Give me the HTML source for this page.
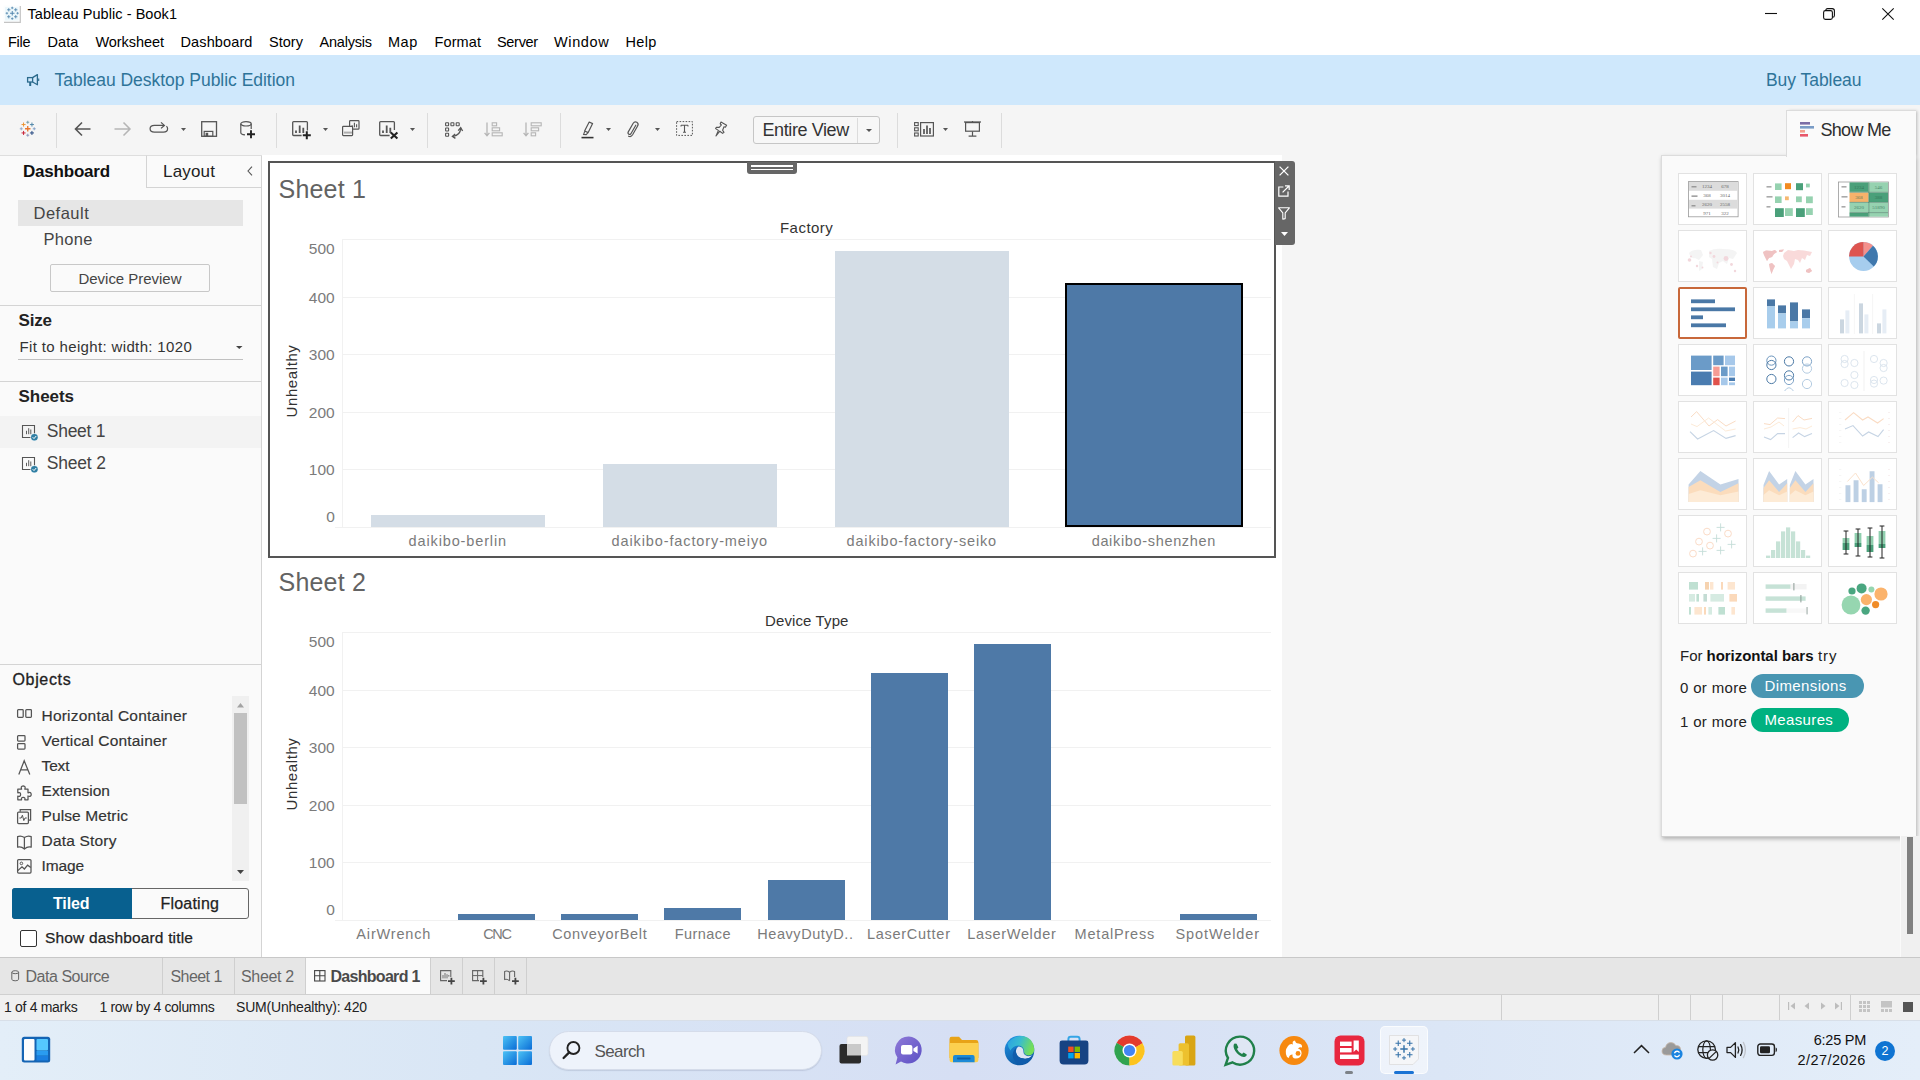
<!DOCTYPE html>
<html><head><meta charset="utf-8"><title>Tableau Public - Book1</title>
<style>
*{box-sizing:border-box;margin:0;padding:0}
html,body{width:1920px;height:1080px;overflow:hidden;background:#fff;font-family:"Liberation Sans",sans-serif;}
#r{position:relative;width:1920px;height:1080px;overflow:hidden}
.a{position:absolute}
.t{position:absolute;white-space:nowrap;line-height:1;}
svg{position:absolute;overflow:visible}
</style></head>
<body><div id="r">
<div class="a" style="left:0px;top:55px;width:1920px;height:50px;background:#cfe8fc;"></div>
<div class="a" style="left:0px;top:105px;width:1920px;height:852px;background:#f5f5f5;"></div>
<div class="a" style="left:0px;top:155px;width:262px;height:802px;background:#fafafa;border-right:1px solid #d4d4d4;"></div>
<div class="a" style="left:0px;top:155px;width:262px;height:1px;background:#dedede;"></div>
<div class="a" style="left:146px;top:155px;width:115px;height:33px;background:#fafafa;border-left:1px solid #d4d4d4;border-bottom:1px solid #d4d4d4;border-top:1px solid #dedede;"></div>
<div class="a" style="left:18px;top:200px;width:225px;height:26px;background:#e6e6e6;"></div>
<div class="a" style="left:50px;top:264px;width:160px;height:28px;background:#fafafa;border:1px solid #c8c8c8;border-radius:2px;"></div>
<div class="a" style="left:0px;top:305px;width:261px;height:1px;background:#d4d4d4;"></div>
<div class="a" style="left:18px;top:359px;width:225px;height:1px;background:#c0c0c0;"></div>
<div class="a" style="left:0px;top:381px;width:261px;height:1px;background:#d4d4d4;"></div>
<div class="a" style="left:0px;top:416px;width:261px;height:32px;background:#f3f3f3;"></div>
<div class="a" style="left:0px;top:664px;width:261px;height:1px;background:#d4d4d4;"></div>
<div class="a" style="left:232px;top:696px;width:17px;height:185px;background:#f0f0f0;"></div>
<div class="a" style="left:234px;top:713px;width:13px;height:91px;background:#c1c1c1;"></div>
<div class="a" style="left:12px;top:888px;width:237px;height:31px;background:#fafafa;border:1px solid #666;border-radius:3px;"></div>
<div class="a" style="left:12px;top:888px;width:120px;height:31px;background:#08608f;border-radius:3px 0 0 3px;"></div>
<div class="a" style="left:20px;top:930px;width:17px;height:17px;background:#fff;border:1px solid #333;border-radius:2px;"></div>
<div class="a" style="left:262px;top:155px;width:1020px;height:802px;background:#fff;"></div>
<div class="a" style="left:0px;top:957px;width:1920px;height:38px;background:#e6e6e6;border-top:1px solid #c8c8c8;border-bottom:1px solid #d0d0d0;"></div>
<div class="a" style="left:306px;top:958px;width:125px;height:36px;background:#fafafa;"></div>
<div class="a" style="left:162px;top:958px;width:1px;height:36px;background:#cfcfcf;"></div>
<div class="a" style="left:234px;top:958px;width:1px;height:36px;background:#cfcfcf;"></div>
<div class="a" style="left:305px;top:958px;width:1px;height:36px;background:#cfcfcf;"></div>
<div class="a" style="left:430px;top:958px;width:1px;height:36px;background:#cfcfcf;"></div>
<div class="a" style="left:462px;top:958px;width:1px;height:36px;background:#cfcfcf;"></div>
<div class="a" style="left:494px;top:958px;width:1px;height:36px;background:#cfcfcf;"></div>
<div class="a" style="left:526px;top:958px;width:1px;height:36px;background:#cfcfcf;"></div>
<div class="a" style="left:0px;top:995px;width:1920px;height:26px;background:#f0f0f0;"></div>
<div class="a" style="left:0px;top:1020px;width:1920px;height:60px;background:linear-gradient(90deg,#e3eef8 0%,#d9e6f5 25%,#d6dff4 50%,#dbe6f6 75%,#e4eef9 100%);border-top:1px solid #d8dfe8;"></div>
<div class="a" style="left:342px;top:239px;width:929px;height:1px;background:#f1f1f1;"></div>
<div class="a" style="left:342px;top:297px;width:929px;height:1px;background:#f1f1f1;"></div>
<div class="a" style="left:342px;top:354px;width:929px;height:1px;background:#f1f1f1;"></div>
<div class="a" style="left:342px;top:412px;width:929px;height:1px;background:#f1f1f1;"></div>
<div class="a" style="left:342px;top:469px;width:929px;height:1px;background:#f1f1f1;"></div>
<div class="a" style="left:342px;top:527px;width:929px;height:1px;background:#f1f1f1;"></div>
<div class="a" style="left:335px;top:527px;width:7px;height:1px;background:#f1f1f1;"></div>
<div class="a" style="left:342px;top:239px;width:1px;height:289px;background:#f1f1f1;"></div>
<div class="a" style="left:371px;top:515px;width:174px;height:12px;background:#d4dde6;"></div>
<div class="a" style="left:603px;top:464px;width:174px;height:63px;background:#d4dde6;"></div>
<div class="a" style="left:835px;top:251px;width:174px;height:276px;background:#d4dde6;"></div>
<div class="a" style="left:1065px;top:283px;width:178px;height:244px;background:#4e79a7;border:2px solid #000;"></div>
<div class="a" style="left:342px;top:632px;width:929px;height:1px;background:#f1f1f1;"></div>
<div class="a" style="left:342px;top:690px;width:929px;height:1px;background:#f1f1f1;"></div>
<div class="a" style="left:342px;top:747px;width:929px;height:1px;background:#f1f1f1;"></div>
<div class="a" style="left:342px;top:805px;width:929px;height:1px;background:#f1f1f1;"></div>
<div class="a" style="left:342px;top:862px;width:929px;height:1px;background:#f1f1f1;"></div>
<div class="a" style="left:342px;top:920px;width:929px;height:1px;background:#f1f1f1;"></div>
<div class="a" style="left:335px;top:920px;width:7px;height:1px;background:#f1f1f1;"></div>
<div class="a" style="left:342px;top:632px;width:1px;height:289px;background:#f1f1f1;"></div>
<div class="a" style="left:458px;top:914px;width:77px;height:6px;background:#4e79a7;"></div>
<div class="a" style="left:561px;top:914px;width:77px;height:6px;background:#4e79a7;"></div>
<div class="a" style="left:664px;top:908px;width:77px;height:12px;background:#4e79a7;"></div>
<div class="a" style="left:768px;top:880px;width:77px;height:40px;background:#4e79a7;"></div>
<div class="a" style="left:871px;top:673px;width:77px;height:247px;background:#4e79a7;"></div>
<div class="a" style="left:974px;top:644px;width:77px;height:276px;background:#4e79a7;"></div>
<div class="a" style="left:1180px;top:914px;width:77px;height:6px;background:#4e79a7;"></div>
<div class="a" style="left:268px;top:161px;width:1008px;height:397px;border:2px solid #555;"></div>
<div class="a" style="left:747px;top:162px;width:50px;height:12px;background:#666;border-radius:0 0 3px 3px;"></div>
<div class="a" style="left:751px;top:165px;width:42px;height:1.5px;background:#fff;"></div>
<div class="a" style="left:751px;top:168.5px;width:42px;height:1.5px;background:#fff;"></div>
<div class="a" style="left:1275px;top:161px;width:20px;height:84px;background:#666;border-radius:0 3px 3px 0;"></div>
<svg style="left:3px;top:5px" width="19" height="19" viewBox="0 0 19 19"><rect x="0.5" y="0.5" width="16.5" height="16.5" fill="#fbfdfe"/><path d="M17.3 1V17.3H1" fill="none" stroke="#c4c4c4" stroke-width="1.2"/><rect x="2" y="2" width="13.5" height="13.5" fill="#e6f3fa" opacity=".7"/></svg>
<svg style="left:4.5px;top:6.3px" width="14.5" height="14.5" viewBox="0 0 20 20"><path d="M6.9 10H13.1M10 6.9V13.1" stroke="#4c82aa" stroke-width="1.3" fill="none"/><path d="M8.3 2.6H11.7M10 0.9000000000000001V4.3" stroke="#4c82aa" stroke-width="1.0" fill="none"/><path d="M8.3 17.4H11.7M10 15.7V19.099999999999998" stroke="#4c82aa" stroke-width="1.0" fill="none"/><path d="M0.9000000000000001 10H4.3M2.6 8.3V11.7" stroke="#4c82aa" stroke-width="1.0" fill="none"/><path d="M15.7 10H19.099999999999998M17.4 8.3V11.7" stroke="#4c82aa" stroke-width="1.0" fill="none"/><path d="M2.9000000000000004 5.2H7.5M5.2 2.9000000000000004V7.5" stroke="#4c82aa" stroke-width="1.1" fill="none"/><path d="M12.5 5.2H17.1M14.8 2.9000000000000004V7.5" stroke="#4c82aa" stroke-width="1.1" fill="none"/><path d="M2.9000000000000004 14.8H7.5M5.2 12.5V17.1" stroke="#4c82aa" stroke-width="1.1" fill="none"/><path d="M12.5 14.8H17.1M14.8 12.5V17.1" stroke="#4c82aa" stroke-width="1.1" fill="none"/></svg>
<svg style="left:1765px;top:8px" width="12" height="12" viewBox="0 0 12 12"><path d="M0 5.5H12" stroke="#111" stroke-width="1.1"/></svg>
<svg style="left:1823px;top:8px" width="12" height="12" viewBox="0 0 12 12"><rect x="0.6" y="2.6" width="8.8" height="8.8" rx="1.8" fill="none" stroke="#111" stroke-width="1.1"/><path d="M2.8 2.6V2.4Q2.8 0.6 4.6 0.6H9.2Q11.4 0.6 11.4 2.8V7.4Q11.4 9.2 9.6 9.2H9.4" fill="none" stroke="#111" stroke-width="1.1"/></svg>
<svg style="left:1882px;top:8px" width="12" height="12" viewBox="0 0 12 12"><path d="M0.3 0.3L11.7 11.7M11.7 0.3L0.3 11.7" stroke="#111" stroke-width="1.1"/></svg>
<svg style="left:26px;top:73px" width="14" height="14" viewBox="0 0 14 14"><rect x="1.6" y="4.6" width="5" height="4.4" fill="none" stroke="#2b6a8c" stroke-width="1.3"/><path d="M6.6 4.6L11.4 1.6V11.8L6.6 9" fill="none" stroke="#2b6a8c" stroke-width="1.3" stroke-linejoin="round"/><path d="M4.2 9V13" stroke="#2b6a8c" stroke-width="2"/><path d="M12.7 5.4V8" stroke="#2b6a8c" stroke-width="1.1"/></svg>
<svg style="left:19px;top:120px" width="17.5" height="17.5" viewBox="0 0 20 20"><path d="M6.9 10H13.1M10 6.9V13.1" stroke="#e8762d" stroke-width="1.5" fill="none"/><path d="M8.3 2.6H11.7M10 0.9000000000000001V4.3" stroke="#7099a6" stroke-width="1.0" fill="none"/><path d="M8.3 17.4H11.7M10 15.7V19.099999999999998" stroke="#8590b8" stroke-width="1.0" fill="none"/><path d="M0.9000000000000001 10H4.3M2.6 8.3V11.7" stroke="#8fa3c4" stroke-width="1.0" fill="none"/><path d="M15.7 10H19.099999999999998M17.4 8.3V11.7" stroke="#7d9cc4" stroke-width="1.0" fill="none"/><path d="M2.9000000000000004 5.2H7.5M5.2 2.9000000000000004V7.5" stroke="#eb912c" stroke-width="1.1" fill="none"/><path d="M12.5 5.2H17.1M14.8 2.9000000000000004V7.5" stroke="#4f86a8" stroke-width="1.1" fill="none"/><path d="M2.9000000000000004 14.8H7.5M5.2 12.5V17.1" stroke="#c72035" stroke-width="1.1" fill="none"/><path d="M12.5 14.8H17.1M14.8 12.5V17.1" stroke="#1f447e" stroke-width="1.1" fill="none"/></svg>
<div class="a" style="left:56px;top:113px;width:1px;height:35px;background:#dcdcdc"></div>
<div class="a" style="left:276px;top:113px;width:1px;height:35px;background:#dcdcdc"></div>
<div class="a" style="left:427px;top:113px;width:1px;height:35px;background:#dcdcdc"></div>
<div class="a" style="left:560px;top:113px;width:1px;height:35px;background:#dcdcdc"></div>
<div class="a" style="left:897px;top:113px;width:1px;height:35px;background:#dcdcdc"></div>
<div class="a" style="left:1001px;top:113px;width:1px;height:35px;background:#dcdcdc"></div>
<svg style="left:74px;top:121px" width="18" height="16" viewBox="0 0 18 16"><path d="M16.5 8H1.5M8 1.5L1.5 8L8 14.5" fill="none" stroke="#555" stroke-width="1.6"/></svg>
<svg style="left:113.5px;top:121px" width="18" height="16" viewBox="0 0 18 16"><path d="M0.5 8H15.5M9.5 1.5L16 8L9.5 14.5" fill="none" stroke="#b5b5b5" stroke-width="1.5"/></svg>
<svg style="left:149px;top:121px" width="20" height="14" viewBox="0 0 20 14"><path d="M15 4.4H5.4Q1.1 4.4 1.1 7.7Q1.1 11 5.4 11H14.4Q18.6 11 18.6 7.7Q18.6 6 17.4 5.2" fill="none" stroke="#555" stroke-width="1.25"/><path d="M12 1.4L15.4 4.4L12 7.4" fill="none" stroke="#555" stroke-width="1.25"/></svg>
<svg style="left:181.0px;top:128.0px" width="5" height="3" viewBox="0 0 5 3"><path d="M0 0H5L2.5 3Z" fill="#555"/></svg>
<svg style="left:201px;top:121px" width="16" height="17" viewBox="0 0 16 17"><rect x="0.7" y="0.7" width="14.8" height="14.6" fill="none" stroke="#555" stroke-width="1.3"/><rect x="3.2" y="10.4" width="8.6" height="4.9" fill="none" stroke="#555" stroke-width="1.2"/><rect x="4.6" y="11.8" width="2.6" height="3.4" fill="#555"/></svg>
<svg style="left:240px;top:121px" width="16" height="18" viewBox="0 0 16 18"><ellipse cx="6" cy="2.8" rx="5.2" ry="2.2" fill="none" stroke="#555" stroke-width="1.2"/><path d="M0.8 2.8V11.5Q0.8 13.6 5 13.8M11.2 2.8V8" fill="none" stroke="#555" stroke-width="1.2"/><path d="M7 13.2H15M11 9.2V17.2" stroke="#222" stroke-width="1.9"/></svg>
<svg style="left:292px;top:121px" width="20" height="18" viewBox="0 0 20 18"><path d="M15.4 9.6V1.6Q15.4 0.7 14.5 0.7H1.6Q0.7 0.7 0.7 1.6V13.6Q0.7 14.5 1.6 14.5H9.6" fill="none" stroke="#555" stroke-width="1.3"/><path d="M4 12V9.4M7.7 12V4.4M11.3 12V6.8" stroke="#555" stroke-width="1.8"/><path d="M10.8 14.2H18.8M14.8 10.2V18.2" stroke="#222" stroke-width="2"/></svg>
<svg style="left:323.0px;top:128.0px" width="5" height="3" viewBox="0 0 5 3"><path d="M0 0H5L2.5 3Z" fill="#555"/></svg>
<svg style="left:342px;top:120px" width="18" height="17" viewBox="0 0 18 17"><rect x="7.6" y="0.6" width="9.4" height="8.6" rx="0.8" fill="none" stroke="#555" stroke-width="1.2"/><path d="M10.2 7.2V5.2M12.4 7.2V2.8M14.6 7.2V4.2" stroke="#555" stroke-width="1.1"/><rect x="0.6" y="6.4" width="10" height="9.2" rx="0.8" fill="#f5f5f5" stroke="#555" stroke-width="1.2"/><path d="M3 13.6V11.6M5 13.6V11.6M7 13.6V11.6M9 13.6V11.6" stroke="#555" stroke-width="0.9"/></svg>
<svg style="left:379px;top:121px" width="20" height="18" viewBox="0 0 20 18"><path d="M15.4 9V1.6Q15.4 0.7 14.5 0.7H1.6Q0.7 0.7 0.7 1.6V13.6Q0.7 14.5 1.6 14.5H10.6" fill="none" stroke="#555" stroke-width="1.3"/><path d="M4 12V9.4M7.7 12V4.4M11.3 12V6.8" stroke="#555" stroke-width="1.8"/><path d="M11.8 11.4L18.4 17.6M18.4 11.4L11.8 17.6" stroke="#222" stroke-width="2.1"/></svg>
<svg style="left:410.0px;top:128.0px" width="5" height="3" viewBox="0 0 5 3"><path d="M0 0H5L2.5 3Z" fill="#555"/></svg>
<svg style="left:444.5px;top:121.5px" width="19" height="17" viewBox="0 0 19 17"><rect x="0.6" y="0.8" width="3" height="3" rx="0.5" fill="none" stroke="#555" stroke-width="1.1"/><rect x="5.9" y="0.8" width="3" height="3" rx="0.5" fill="none" stroke="#555" stroke-width="1.1"/><rect x="11.2" y="0.8" width="3" height="3" rx="0.5" fill="none" stroke="#555" stroke-width="1.1"/><rect x="0.6" y="6" width="3" height="3" rx="0.5" fill="none" stroke="#555" stroke-width="1.1"/><rect x="0.6" y="11.2" width="3" height="3" rx="0.5" fill="none" stroke="#555" stroke-width="1.1"/><path d="M15.6 6.6Q15.4 13.2 8 14.4" fill="none" stroke="#555" stroke-width="1.3"/><path d="M13.2 8.6L15.7 5.6L17.6 9" fill="none" stroke="#555" stroke-width="1.3"/><path d="M10.2 12L7.4 14.4L10.4 16.4" fill="none" stroke="#555" stroke-width="1.3"/></svg>
<svg style="left:484px;top:121.5px" width="19" height="15" viewBox="0 0 19 15"><path d="M3 0.5V13.5M0.6 10.8L3 13.8L5.4 10.8" fill="none" stroke="#b5b5b5" stroke-width="1.3"/><rect x="8.2" y="0.8" width="4.4" height="3" fill="none" stroke="#b5b5b5" stroke-width="1.1"/><rect x="8.2" y="5.8" width="7.4" height="3" fill="none" stroke="#b5b5b5" stroke-width="1.1"/><rect x="8.2" y="10.8" width="10" height="3" fill="none" stroke="#b5b5b5" stroke-width="1.1"/></svg>
<svg style="left:522.5px;top:121.5px" width="19" height="15" viewBox="0 0 19 15"><path d="M3 0.5V13.5M0.6 10.8L3 13.8L5.4 10.8" fill="none" stroke="#b5b5b5" stroke-width="1.3"/><rect x="8.2" y="0.8" width="10" height="3" fill="none" stroke="#b5b5b5" stroke-width="1.1"/><rect x="8.2" y="5.8" width="7.4" height="3" fill="none" stroke="#b5b5b5" stroke-width="1.1"/><rect x="8.2" y="10.8" width="4.4" height="3" fill="none" stroke="#b5b5b5" stroke-width="1.1"/></svg>
<svg style="left:580.5px;top:120.5px" width="14" height="18" viewBox="0 0 14 18"><path d="M8.2 1L11.6 2.6L7.2 11.6L3.6 10Z" fill="none" stroke="#555" stroke-width="1.2" stroke-linejoin="round"/><path d="M3.8 10.2L2.6 13.4L5.2 13.6L7 11.6" fill="none" stroke="#555" stroke-width="1.1"/><path d="M0.5 16.6H12.5" stroke="#333" stroke-width="1.6"/></svg>
<svg style="left:606.0px;top:128.0px" width="5" height="3" viewBox="0 0 5 3"><path d="M0 0H5L2.5 3Z" fill="#555"/></svg>
<svg style="left:626px;top:120.5px" width="14" height="17" viewBox="0 0 14 17"><path d="M9.8 4.2L5.2 12.2Q4.2 14 2.8 13.2Q1.4 12.4 2.4 10.6L7.2 2.2Q8.6 0 10.8 1.2Q13 2.6 11.6 5L6.6 13.8Q5 16.4 2.6 15.2" fill="none" stroke="#555" stroke-width="1.2" stroke-linecap="round"/></svg>
<svg style="left:655.0px;top:128.0px" width="5" height="3" viewBox="0 0 5 3"><path d="M0 0H5L2.5 3Z" fill="#555"/></svg>
<svg style="left:676px;top:121px" width="17" height="15" viewBox="0 0 17 15"><rect x="0.6" y="0.6" width="15.8" height="13.8" fill="none" stroke="#555" stroke-width="1" stroke-dasharray="1.6 1.4"/><path d="M5 4.2H12M8.5 4.2V11.2M7 11.2H10M5 4.2V5.6M12 4.2V5.6" stroke="#555" stroke-width="1.1" fill="none"/></svg>
<svg style="left:714px;top:120.5px" width="14" height="16" viewBox="0 0 14 16"><path d="M7 1L12.6 4.2L11.4 6.2L10 5.8L8.6 9.2L10 11.4L8.6 12.4L5.8 10.2L2 15L4.4 9.4L1.6 7.6L2.4 6.2L5.2 6.4L7.4 4L6.2 2.8Z" fill="none" stroke="#555" stroke-width="1.1" stroke-linejoin="round"/></svg>
<div class="a" style="left:753px;top:116px;width:127px;height:28px;border:1px solid #c6c6c6;border-radius:3px;background:#f7f7f7"></div>
<div class="a" style="left:857px;top:117.5px;width:1px;height:25px;background:#dcdcdc"></div>
<svg style="left:865.5px;top:128.5px" width="6" height="3" viewBox="0 0 6 3"><path d="M0 0H6L3.0 3Z" fill="#555"/></svg>
<svg style="left:914px;top:121.5px" width="20" height="15" viewBox="0 0 20 15"><rect x="0.6" y="0.6" width="3.6" height="3" fill="none" stroke="#555" stroke-width="1.1"/><rect x="0.6" y="5.8" width="3.6" height="3" fill="none" stroke="#555" stroke-width="1.1"/><rect x="0.6" y="11" width="3.6" height="3" fill="none" stroke="#555" stroke-width="1.1"/><rect x="6.6" y="0.6" width="12.8" height="13.4" fill="none" stroke="#555" stroke-width="1.2"/><path d="M10 12V7M13 12V3.6M16 12V6" stroke="#555" stroke-width="1.7"/></svg>
<svg style="left:943.0px;top:128.0px" width="5" height="3" viewBox="0 0 5 3"><path d="M0 0H5L2.5 3Z" fill="#555"/></svg>
<svg style="left:964px;top:121px" width="17" height="16" viewBox="0 0 17 16"><path d="M0 1H17" stroke="#555" stroke-width="1.3"/><rect x="1.6" y="1.6" width="13.8" height="8.6" fill="none" stroke="#555" stroke-width="1.2"/><path d="M8.5 10.4V15M4.6 15.2H12.4M8.5 0V1" stroke="#555" stroke-width="1.2"/></svg>
<svg style="left:247px;top:166px" width="6" height="10" viewBox="0 0 6 10"><path d="M5 0.6L1 5L5 9.4" fill="none" stroke="#555" stroke-width="1.1"/></svg>
<svg style="left:235.75px;top:345.5px" width="6.5" height="3" viewBox="0 0 6.5 3"><path d="M0 0H6.5L3.25 3Z" fill="#444"/></svg>
<svg style="left:22px;top:425px" width="17" height="17" viewBox="0 0 17 17"><path d="M12.5 8.6V0.5H0.5V12.5H8.6" fill="none" stroke="#555" stroke-width="1.1"/><path d="M4.5 9.2V5.8M6.7 9.2V3.2M8.8 9.2V4.5" stroke="#555" stroke-width="0.95"/><circle cx="12.4" cy="12.2" r="3.7" fill="#d4e8f2"/><circle cx="12.4" cy="12.2" r="3.3" fill="#2f7ea3"/><path d="M10.7 12.2L12 13.6L14.2 11" fill="none" stroke="#fff" stroke-width="1"/></svg>
<svg style="left:22px;top:457px" width="17" height="17" viewBox="0 0 17 17"><path d="M12.5 8.6V0.5H0.5V12.5H8.6" fill="none" stroke="#555" stroke-width="1.1"/><path d="M4.5 9.2V5.8M6.7 9.2V3.2M8.8 9.2V4.5" stroke="#555" stroke-width="0.95"/><circle cx="12.4" cy="12.2" r="3.7" fill="#d4e8f2"/><circle cx="12.4" cy="12.2" r="3.3" fill="#2f7ea3"/><path d="M10.7 12.2L12 13.6L14.2 11" fill="none" stroke="#fff" stroke-width="1"/></svg>
<svg style="left:17px;top:709px" width="16" height="10" viewBox="0 0 16 10"><rect x="0.6" y="0.6" width="5.6" height="7.8" rx="0.8" fill="none" stroke="#555" stroke-width="1.25"/><rect x="8.8" y="0.6" width="5.6" height="7.8" rx="0.8" fill="none" stroke="#555" stroke-width="1.25"/></svg>
<svg style="left:17px;top:734.5px" width="10" height="16" viewBox="0 0 10 16"><rect x="0.6" y="0.6" width="7.4" height="5.4" rx="0.8" fill="none" stroke="#555" stroke-width="1.25"/><rect x="0.6" y="8.6" width="7.4" height="5.4" rx="0.8" fill="none" stroke="#555" stroke-width="1.25"/></svg>
<svg style="left:18px;top:759.5px" width="13" height="15" viewBox="0 0 13 15"><path d="M0.8 14.6L6.2 0.8L11.8 14.6M2.8 9.8H9.8" fill="none" stroke="#555" stroke-width="1.25"/></svg>
<svg style="left:17px;top:784.5px" width="15" height="16" viewBox="0 0 15 16"><path d="M4.6 4.2Q3.4 1 6.2 0.8Q9 1 7.8 4.2H11V7.8Q14.2 6.6 14.2 9.4Q14.2 12 11 11V14.8H7.8Q8.6 12.4 6.2 12.4Q3.8 12.4 4.6 14.8H0.8V11Q3.6 12 3.6 9.4Q3.6 6.8 0.8 7.8V4.2Z" fill="none" stroke="#555" stroke-width="1.25" stroke-linejoin="round"/></svg>
<svg style="left:17px;top:809px" width="15" height="16" viewBox="0 0 15 16"><path d="M3.2 2.8V0.6H13.6V11.2H11.6" fill="none" stroke="#555" stroke-width="1.25"/><rect x="0.6" y="3" width="10.8" height="11.6" rx="1" fill="none" stroke="#555" stroke-width="1.25"/><path d="M2.4 9H4.2L5.4 6.2L6.8 11.6L8 9H9.8" fill="none" stroke="#555" stroke-width="1"/></svg>
<svg style="left:17px;top:835px" width="16" height="15" viewBox="0 0 16 15"><path d="M7.4 2.6V14M7.4 2.6Q4 0.2 0.6 1.6V12.2Q4 11 7.4 14Q10.8 11 14.2 12.2V1.6Q10.8 0.2 7.4 2.6" fill="none" stroke="#555" stroke-width="1.25" stroke-linejoin="round"/></svg>
<svg style="left:17px;top:859px" width="15" height="15" viewBox="0 0 15 15"><rect x="0.6" y="0.6" width="13.4" height="13.4" rx="1" fill="none" stroke="#555" stroke-width="1.25"/><circle cx="4.4" cy="4.4" r="1.3" fill="none" stroke="#555" stroke-width="1"/><path d="M0.8 11.6L5 7.8L7.4 10L10.6 6.2L13.8 8.6" fill="none" stroke="#555" stroke-width="1.25"/></svg>
<svg style="left:237px;top:702.5px" width="7" height="4.5" viewBox="0 0 7 4.5"><path d="M0 4.5L3.5 0L7 4.5Z" fill="#a3a3a3"/></svg>
<svg style="left:237px;top:869.5px" width="7" height="4" viewBox="0 0 7 4"><path d="M0 0H7L3.5 4Z" fill="#444"/></svg>
<svg style="left:11px;top:970px" width="9" height="12" viewBox="0 0 9 12"><ellipse cx="4.2" cy="2.2" rx="3.4" ry="1.5" fill="none" stroke="#666" stroke-width="1"/><path d="M0.8 2.2V9.2Q0.8 10.8 4.2 10.8Q7.6 10.8 7.6 9.2V2.2" fill="none" stroke="#666" stroke-width="1"/></svg>
<svg style="left:314px;top:970px" width="12" height="12" viewBox="0 0 12 12"><rect x="0.6" y="0.6" width="10.4" height="10.4" fill="none" stroke="#444" stroke-width="1.1"/><path d="M5.8 0.6V11M0.6 5.8H11" stroke="#444" stroke-width="1.1"/></svg>
<svg style="left:440px;top:969.5px" width="16" height="16" viewBox="0 0 16 16"><path d="M10.8 7V0.6H0.6V10.6H7" fill="none" stroke="#666" stroke-width="1.1"/><path d="M3 8.4V5M5 8.4V3M7 8.4V4.2M8.8 6.6V5" stroke="#666" stroke-width="0.9"/><path d="M8 11.2H14.8M11.4 7.8V14.6" stroke="#444" stroke-width="1.8"/></svg>
<svg style="left:472px;top:969.5px" width="16" height="16" viewBox="0 0 16 16"><path d="M10.8 7V0.6H0.6V10.6H7" fill="none" stroke="#666" stroke-width="1.1"/><path d="M5.6 0.6V10.6M0.6 5.6H10.8" stroke="#666" stroke-width="1"/><path d="M8 11.2H14.8M11.4 7.8V14.6" stroke="#444" stroke-width="1.8"/></svg>
<svg style="left:504px;top:969.5px" width="16" height="16" viewBox="0 0 16 16"><path d="M5.6 2.2V10.8M5.6 2.2Q3 0.4 0.6 1.4V9.6Q3 8.6 5.6 10.8M5.6 2.2Q8 0.4 10.6 1.4V7" fill="none" stroke="#666" stroke-width="1.1" stroke-linejoin="round"/><path d="M8 11.2H14.8M11.4 7.8V14.6" stroke="#444" stroke-width="1.8"/></svg>
<svg style="left:1279px;top:166px" width="10" height="10" viewBox="0 0 10 10"><path d="M0.6 0.6L9.4 9.4M9.4 0.6L0.6 9.4" stroke="#fff" stroke-width="1.3"/></svg>
<svg style="left:1278px;top:185px" width="12" height="12" viewBox="0 0 12 12"><path d="M5.4 2H0.8V11.2H10V6.6" fill="none" stroke="#fff" stroke-width="1.2"/><path d="M4.6 7.4L11 1M7 0.8H11.2V5" fill="none" stroke="#fff" stroke-width="1.2"/></svg>
<svg style="left:1278px;top:207px" width="12" height="13" viewBox="0 0 12 13"><path d="M0.6 0.8H11.4L7.2 5.8V11.6L4.8 12.2V5.8Z" fill="none" stroke="#fff" stroke-width="1.1" stroke-linejoin="round"/></svg>
<svg style="left:1281px;top:232px" width="7" height="4" viewBox="0 0 7 4"><path d="M0 0H7L3.5 4Z" fill="#fff"/></svg>
<div class="a" style="left:1501px;top:995px;width:1px;height:25px;background:#cfcfcf"></div>
<div class="a" style="left:1658px;top:995px;width:1px;height:25px;background:#cfcfcf"></div>
<div class="a" style="left:1690px;top:995px;width:1px;height:25px;background:#cfcfcf"></div>
<div class="a" style="left:1722px;top:995px;width:1px;height:25px;background:#cfcfcf"></div>
<div class="a" style="left:1779px;top:995px;width:1px;height:25px;background:#cfcfcf"></div>
<div class="a" style="left:1850px;top:995px;width:1px;height:25px;background:#cfcfcf"></div>
<svg style="left:1788px;top:1002px" width="8" height="8" viewBox="0 0 8 8"><path d="M0.6 0V8" stroke="#bdbdbd" stroke-width="1.2"/><path d="M7 0.5L2.5 4L7 7.5Z" fill="#bdbdbd"/></svg>
<svg style="left:1804px;top:1002px" width="6" height="8" viewBox="0 0 6 8"><path d="M5 0.5L0.5 4L5 7.5Z" fill="#bdbdbd"/></svg>
<svg style="left:1820px;top:1002px" width="6" height="8" viewBox="0 0 6 8"><path d="M1 0.5L5.5 4L1 7.5Z" fill="#bdbdbd"/></svg>
<svg style="left:1834px;top:1002px" width="8" height="8" viewBox="0 0 8 8"><path d="M7.4 0V8" stroke="#bdbdbd" stroke-width="1.2"/><path d="M1 0.5L5.5 4L1 7.5Z" fill="#bdbdbd"/></svg>
<svg style="left:1858.5px;top:1001px" width="11" height="11" viewBox="0 0 11 11"><rect x="0" y="0" width="3" height="3" fill="#c4c4c4"/><rect x="0" y="4" width="3" height="3" fill="#c4c4c4"/><rect x="0" y="8" width="3" height="3" fill="#c4c4c4"/><rect x="4" y="0" width="3" height="3" fill="#c4c4c4"/><rect x="4" y="4" width="3" height="3" fill="#c4c4c4"/><rect x="4" y="8" width="3" height="3" fill="#c4c4c4"/><rect x="8" y="0" width="3" height="3" fill="#c4c4c4"/><rect x="8" y="4" width="3" height="3" fill="#c4c4c4"/><rect x="8" y="8" width="3" height="3" fill="#c4c4c4"/></svg>
<svg style="left:1880.5px;top:1001px" width="11" height="11" viewBox="0 0 11 11"><rect x="0" y="0" width="11" height="6.5" fill="#c4c4c4"/><rect x="0" y="8" width="3" height="3" fill="#c4c4c4"/><rect x="4" y="8" width="3" height="3" fill="#c4c4c4"/><rect x="8" y="8" width="3" height="3" fill="#c4c4c4"/></svg>
<svg style="left:1903px;top:1001.5px" width="10" height="10" viewBox="0 0 10 10"><rect x="0" y="0" width="10" height="10" fill="#555"/></svg>
<svg style="left:21px;top:1036px" width="30" height="28" viewBox="0 0 30 28"><rect x="0.8" y="0.8" width="28.4" height="25.8" rx="2.5" fill="#1464b4"/><rect x="3" y="3" width="10.5" height="21.5" rx="1" fill="#fdfdfd"/><rect x="15.5" y="3" width="11.5" height="11.5" rx="1" fill="#55c8ff"/><rect x="15.5" y="15" width="11.5" height="4.6" fill="#2a9cf0"/><rect x="15.5" y="20" width="11.5" height="4.5" fill="#1a7fe0"/></svg>
<svg style="left:503px;top:1036px" width="29" height="29" viewBox="0 0 29 29"><defs><linearGradient id="wg" x1="0" y1="0" x2="1" y2="1"><stop offset="0" stop-color="#4cc2f5"/><stop offset="1" stop-color="#0a6cd6"/></linearGradient></defs><rect x="0" y="0" width="13.8" height="13.8" rx="1" fill="url(#wg)"/><rect x="15.2" y="0" width="13.8" height="13.8" rx="1" fill="url(#wg)"/><rect x="0" y="15.2" width="13.8" height="13.8" rx="1" fill="url(#wg)"/><rect x="15.2" y="15.2" width="13.8" height="13.8" rx="1" fill="url(#wg)"/></svg>
<div class="a" style="left:549px;top:1031px;width:273px;height:39px;border-radius:20px;background:#eef3fb;border:1px solid #d5dcea;box-shadow:0 1px 1px rgba(120,130,160,.25)"></div>
<svg style="left:562px;top:1040px" width="20" height="20" viewBox="0 0 20 20"><circle cx="11.4" cy="8" r="6" fill="none" stroke="#222" stroke-width="1.9"/><path d="M7.2 12.4L1.6 18" stroke="#222" stroke-width="2.3" stroke-linecap="round"/></svg>
<svg style="left:839px;top:1036px" width="31" height="29" viewBox="0 0 31 29"><rect x="8" y="0.5" width="21" height="19" rx="2" fill="#f4f4f4" stroke="#e2e2e2" stroke-width="0.6"/><rect x="0.5" y="8" width="21.5" height="19.5" rx="2" fill="#2b2b2b"/><rect x="8" y="8" width="14" height="11.5" fill="#c9c9c9"/></svg>
<svg style="left:894px;top:1035px" width="30" height="31" viewBox="0 0 30 31"><defs><linearGradient id="cg" x1="0" y1="0" x2="1" y2="1"><stop offset="0" stop-color="#8f7ad8"/><stop offset="1" stop-color="#5b4fc4"/></linearGradient></defs><path d="M15 1.5A13.5 13.5 0 1 1 7 26.4L1.6 29.4L3.4 22.6A13.5 13.5 0 0 1 15 1.5Z" fill="url(#cg)"/><rect x="7" y="10" width="11.4" height="9.4" rx="2" fill="#fff"/><path d="M19.4 13.4L23.6 10.8V18.6L19.4 16Z" fill="#fff"/></svg>
<svg style="left:949px;top:1036px" width="30" height="27" viewBox="0 0 30 27"><path d="M0.5 3Q0.5 0.8 2.6 0.8H10L13 4H27Q29.4 4 29.4 6.2V22H0.5Z" fill="#e8a317"/><path d="M0.5 7H29.4V24Q29.4 26.2 27 26.2H2.8Q0.5 26.2 0.5 24Z" fill="#fcd04f"/><path d="M4 21Q4 19 6 19H23.6Q25.6 19 25.6 21V26.2H4Z" fill="#1c8ad6"/><rect x="8" y="21.6" width="13.6" height="1.8" rx="0.9" fill="#0e5ea6"/></svg>
<svg style="left:1004px;top:1035px" width="31" height="31" viewBox="0 0 31 31"><defs><linearGradient id="eg" x1="0" y1="0" x2="1" y2="0.3"><stop offset="0" stop-color="#2a9fe4"/><stop offset="0.5" stop-color="#38bcd0"/><stop offset="1" stop-color="#74de58"/></linearGradient><linearGradient id="eb" x1="0.2" y1="0" x2="0.6" y2="1"><stop offset="0" stop-color="#2092e2"/><stop offset="1" stop-color="#0c57a2"/></linearGradient></defs><circle cx="15.5" cy="15.5" r="14.8" fill="url(#eb)"/><path d="M3.6 8.4Q9.6 0.4 18.6 1Q29.6 2.8 30.3 14.2Q30 20 24.4 20.4Q19.8 20.2 20 16.2Q19.6 11 14.2 10.6Q9 10.8 6.4 15.6Q3.8 12.4 3.6 8.4Z" fill="url(#eg)"/><path d="M14.6 11.4Q19.2 11.8 19.4 16Q19.2 20.6 24 21.2L28.6 20.6Q24.6 24.6 19.6 23.6Q12.6 22.4 11.8 16.6Q11.8 12.4 14.6 11.4Z" fill="#dde4f4"/><path d="M11.8 16.6Q12.6 22.4 19.6 23.6Q24.6 24.6 28.6 20.6Q26 28 18 29.6Q9.4 28 8.6 20Q8.8 14 14.6 11.4Q11.8 12.4 11.8 16.6Z" fill="#0f5cab"/></svg>
<svg style="left:1058.5px;top:1035px" width="30" height="31" viewBox="0 0 30 31"><path d="M9.4 6V4.2Q9.4 1.8 11.8 1.8H18.2Q20.6 1.8 20.6 4.2V6" fill="none" stroke="#35a5e6" stroke-width="2"/><path d="M0.6 8Q0.6 5.6 3 5.6H27Q29.4 5.6 29.4 8V25.6Q29.4 29.6 25.4 29.6H4.6Q0.6 29.6 0.6 25.6Z" fill="#174383"/><rect x="9.2" y="11.6" width="5.4" height="5.4" fill="#f25022"/><rect x="15.6" y="11.6" width="5.4" height="5.4" fill="#7fba00"/><rect x="9.2" y="18" width="5.4" height="5.4" fill="#00a4ef"/><rect x="15.6" y="18" width="5.4" height="5.4" fill="#ffb900"/></svg>
<svg style="left:1113.5px;top:1035px" width="31" height="31" viewBox="0 0 31 31"><circle cx="15.5" cy="15.5" r="15" fill="#fff"/><path d="M15.5 15.5L2.5 8A15 15 0 0 1 28.5 8Z" fill="#e33b2e"/><path d="M15.5 15.5L28.5 8A15 15 0 0 1 15.5 30.5Z" fill="#fcc31e"/><path d="M15.5 15.5L15.5 30.5A15 15 0 0 1 2.5 8Z" fill="#30a350"/><path d="M2.5 8L9.6 19.2L15.5 15.5Z" fill="#30a350"/><path d="M28.5 8H15.5V15.5Z" fill="#e33b2e"/><path d="M15.5 30.5L21.8 19L15.5 15.5Z" fill="#fcc31e"/><circle cx="15.5" cy="15.5" r="7" fill="#fff"/><circle cx="15.5" cy="15.5" r="5.6" fill="#4285f4"/></svg>
<svg style="left:1172px;top:1035px" width="24" height="31" viewBox="0 0 24 31"><rect x="13" y="0.5" width="10.4" height="30" rx="1.6" fill="#d9a514"/><rect x="6.6" y="8.2" width="10.4" height="22.3" rx="1.6" fill="#edc12e"/><rect x="0.4" y="16" width="10.4" height="14.5" rx="1.6" fill="#f7dd5c"/></svg>
<svg style="left:1223.5px;top:1034.5px" width="32" height="32" viewBox="0 0 32 32"><path d="M16 1.6A14 14 0 1 1 8.6 27.4L1.6 29.8L4 23A14 14 0 0 1 16 1.6Z" fill="#dfe6f4" stroke="#20804a" stroke-width="2.4"/><path d="M10.6 8.6Q9.2 9.6 9.6 12Q10.6 16.6 15 20Q18.6 22.6 21 21.8Q22.8 21 22.8 19.4L19.6 17.6L18 19Q14.6 17.6 13 14L14.4 12.6L12.6 8.8Z" fill="#20804a"/></svg>
<svg style="left:1279px;top:1035px" width="30" height="31" viewBox="0 0 30 31"><circle cx="15" cy="15.5" r="14.6" fill="#f7890f"/><path d="M8 22Q5 16 9 11Q11 8.4 14 9.4Q12.6 6 16 5.4Q16.6 8.6 19.6 8.4Q23.6 9 23 12.6Q20.6 11.6 19 13.6Q22.6 14.6 22.6 18.6Q22 23.6 16.6 23.6Q12.6 23 13.6 19.4Q10 19.4 10 23Z" fill="#fff"/><circle cx="19" cy="18.4" r="2.4" fill="#f7890f"/></svg>
<svg style="left:1334px;top:1035px" width="31" height="31" viewBox="0 0 31 31"><rect x="0.5" y="0.5" width="30" height="30" rx="6" fill="#e8273f"/><rect x="6" y="6.6" width="11.6" height="4.4" fill="#fff"/><rect x="6" y="13" width="11.6" height="4.4" fill="#fff"/><rect x="6" y="19.6" width="18.8" height="4.4" fill="#fff"/><path d="M19.6 5.4H24.8V17L22.2 14.4L19.6 17Z" fill="#fff"/></svg>
<div class="a" style="left:1345px;top:1071px;width:8px;height:3px;border-radius:2px;background:#7d8288"></div>
<div class="a" style="left:1380px;top:1026px;width:48px;height:48px;border-radius:5px;background:rgba(255,255,255,.55);border:1px solid rgba(255,255,255,.7)"></div>
<svg style="left:1389px;top:1035px" width="30" height="30" viewBox="0 0 30 30"><path d="M0.5 0.5H29.5V24L24 29.5H0.5Z" fill="#f5f6f8" stroke="#dcdcdc" stroke-width="0.8"/></svg>
<svg style="left:1392px;top:1037px" width="24" height="24" viewBox="0 0 20 20"><path d="M6.9 10H13.1M10 6.9V13.1" stroke="#3572a8" stroke-width="1.2" fill="none"/><path d="M8.3 2.6H11.7M10 0.9000000000000001V4.3" stroke="#3572a8" stroke-width="0.8" fill="none"/><path d="M8.3 17.4H11.7M10 15.7V19.099999999999998" stroke="#3572a8" stroke-width="0.8" fill="none"/><path d="M0.9000000000000001 10H4.3M2.6 8.3V11.7" stroke="#3572a8" stroke-width="0.8" fill="none"/><path d="M15.7 10H19.099999999999998M17.4 8.3V11.7" stroke="#3572a8" stroke-width="0.8" fill="none"/><path d="M2.9000000000000004 5.2H7.5M5.2 2.9000000000000004V7.5" stroke="#3572a8" stroke-width="0.9" fill="none"/><path d="M12.5 5.2H17.1M14.8 2.9000000000000004V7.5" stroke="#3572a8" stroke-width="0.9" fill="none"/><path d="M2.9000000000000004 14.8H7.5M5.2 12.5V17.1" stroke="#3572a8" stroke-width="0.9" fill="none"/><path d="M12.5 14.8H17.1M14.8 12.5V17.1" stroke="#3572a8" stroke-width="0.9" fill="none"/></svg>
<div class="a" style="left:1394px;top:1070.5px;width:20px;height:3.5px;border-radius:2px;background:#1a73d4"></div>
<svg style="left:1633px;top:1044px" width="17" height="10" viewBox="0 0 17 10"><path d="M1 9L8.5 1.6L16 9" fill="none" stroke="#222" stroke-width="1.5"/></svg>
<svg style="left:1661px;top:1040px" width="24" height="20" viewBox="0 0 24 20"><path d="M5.6 15Q1 15 1 11Q1 7.6 4.6 7.2Q5.6 2.6 10 2.6Q13.4 2.6 14.8 5.6Q19.6 5.2 19.6 10Q19.6 15 15 15Z" fill="#9a9a9a" stroke="#c8b8a8" stroke-width="0.8"/><circle cx="16" cy="14" r="5.6" fill="#1a84e0"/><path d="M13.4 13.2Q14.4 10.8 17 11.4L18.6 12.6M18.6 14.8Q17.6 17.2 15 16.6L13.4 15.4" fill="none" stroke="#fff" stroke-width="1.3"/></svg>
<svg style="left:1697px;top:1040px" width="22" height="21" viewBox="0 0 22 21"><circle cx="9.6" cy="9.6" r="8.8" fill="none" stroke="#222" stroke-width="1.3"/><ellipse cx="9.6" cy="9.6" rx="3.8" ry="8.8" fill="none" stroke="#222" stroke-width="1.2"/><path d="M1.2 6.6H18M1.2 12.6H11" stroke="#222" stroke-width="1.2"/><circle cx="15.6" cy="15" r="5.2" fill="#e4edf8" stroke="#222" stroke-width="1.3"/><path d="M12 18.4L19.2 11.6" stroke="#222" stroke-width="1.3"/></svg>
<svg style="left:1726px;top:1041px" width="22" height="18" viewBox="0 0 22 18"><path d="M1 6.4H4.6L9.4 1.6V16.4L4.6 11.6H1Z" fill="none" stroke="#222" stroke-width="1.3" stroke-linejoin="round"/><path d="M12 6Q13.6 9 12 12M14.6 3.6Q17.6 9 14.6 14.4" fill="none" stroke="#222" stroke-width="1.3" stroke-linecap="round"/><path d="M17.4 1.4Q21.4 9 17.4 16.6" fill="none" stroke="#c0c4cc" stroke-width="1.3" stroke-linecap="round"/></svg>
<svg style="left:1757px;top:1043px" width="21" height="14" viewBox="0 0 21 14"><rect x="0.8" y="1" width="16.6" height="11.4" rx="2.6" fill="none" stroke="#222" stroke-width="1.4"/><rect x="3" y="3.2" width="10" height="7" rx="1.2" fill="#222"/><path d="M18.6 4.6Q20 4.6 20 6.8Q20 9 18.6 9Z" fill="#222"/></svg>
<div class="a" style="left:1875px;top:1041px;width:20px;height:20px;border-radius:10px;background:#0f74d2"></div>
<div class="a" style="left:1661px;top:155px;width:255px;height:682px;background:#fafafa;border-left:1px solid #dcdcdc;border-bottom:1px solid #cfcfcf;box-shadow:1px 2px 4px rgba(0,0,0,.28)"></div>
<div class="a" style="left:1661px;top:155px;width:126px;height:1px;background:#dcdcdc"></div>
<div class="a" style="left:1786px;top:110px;width:130px;height:47px;background:#fafafa;border-left:1px solid #dcdcdc;border-top:1px solid #dcdcdc;box-shadow:2px 0 3px -1px rgba(0,0,0,.25)"></div>
<div class="a" style="left:1787px;top:153px;width:129px;height:8px;background:#fafafa"></div>
<svg style="left:1800px;top:122px" width="15" height="15" viewBox="0 0 15 15"><rect x="0" y="0" width="10" height="2.6" fill="#7b6ea6"/><rect x="0" y="4" width="14" height="2.6" fill="#7a9cc6"/><rect x="0" y="8" width="5" height="2.6" fill="#f2a08c"/><rect x="0" y="12" width="8" height="2.6" fill="#e8576a"/></svg>
<div class="a" style="left:1678px;top:173px;width:69px;height:52px;background:#fff;border:1px solid #e2e2e2"></div>
<svg style="left:1678.5px;top:173.5px" width="68" height="51" viewBox="0 0 68 51"><rect x="9.5" y="7.6" width="49.6" height="35.2" fill="#fff" stroke="#999" stroke-width="0.8"/><rect x="10" y="8" width="48.6" height="8.8" fill="#dcdcdc"/><rect x="10" y="25.8" width="48.6" height="8.8" fill="#dcdcdc"/><text x="28" y="14.4" font-family="Liberation Serif,serif" font-size="5" fill="#666" text-anchor="middle">1234</text><text x="46" y="14.4" font-family="Liberation Serif,serif" font-size="5" fill="#666" text-anchor="middle">678</text><text x="28" y="23.4" font-family="Liberation Serif,serif" font-size="5" fill="#666" text-anchor="middle">368</text><text x="46" y="23.4" font-family="Liberation Serif,serif" font-size="5" fill="#666" text-anchor="middle">3014</text><text x="28" y="32.2" font-family="Liberation Serif,serif" font-size="5" fill="#666" text-anchor="middle">2620</text><text x="46" y="32.2" font-family="Liberation Serif,serif" font-size="5" fill="#666" text-anchor="middle">2558</text><text x="28" y="40.6" font-family="Liberation Serif,serif" font-size="5" fill="#666" text-anchor="middle">971</text><text x="46" y="40.6" font-family="Liberation Serif,serif" font-size="5" fill="#666" text-anchor="middle">322</text><rect x="12.5" y="12" width="5" height="1.5" fill="#999"/><rect x="12.5" y="21.4" width="6" height="1.5" fill="#999"/><rect x="12.5" y="31" width="4" height="1.5" fill="#999"/></svg>
<div class="a" style="left:1753px;top:173px;width:69px;height:52px;background:#fff;border:1px solid #e2e2e2"></div>
<svg style="left:1753.5px;top:173.5px" width="68" height="51" viewBox="0 0 68 51"><rect x="12.5" y="12" width="5" height="1.6" fill="#aaa"/><rect x="12.5" y="22" width="6" height="1.6" fill="#aaa"/><rect x="12.5" y="32" width="4" height="1.6" fill="#aaa"/><rect x="21" y="9.4" width="6.6" height="6.6" fill="#96d2b0"/><rect x="31" y="9.2" width="6" height="6" fill="#f28b20"/><rect x="42" y="9.2" width="7" height="7" fill="#4aa07a"/><rect x="52" y="9.6" width="3.8" height="3.8" fill="#96d2b0"/><rect x="21" y="22.4" width="6.6" height="6.6" fill="#96d2b0"/><rect x="31" y="22.4" width="3.8" height="3.8" fill="#f6b871"/><rect x="42" y="22.4" width="5.8" height="5.8" fill="#96d2b0"/><rect x="52" y="22.4" width="6.8" height="6.8" fill="#96d2b0"/><rect x="21" y="34.2" width="8.8" height="8.8" fill="#4aa07a"/><rect x="31" y="34.2" width="7.8" height="7.8" fill="#96d2b0"/><rect x="42" y="34.2" width="8.8" height="8.8" fill="#4aa07a"/><rect x="52" y="34.2" width="6.8" height="6.8" fill="#96d2b0"/></svg>
<div class="a" style="left:1828px;top:173px;width:69px;height:52px;background:#fff;border:1px solid #e2e2e2"></div>
<svg style="left:1828.5px;top:173.5px" width="68" height="51" viewBox="0 0 68 51"><rect x="9.5" y="8" width="50" height="35" fill="#fff" stroke="#999" stroke-width="0.8"/><rect x="20.5" y="8.4" width="19" height="9.4" fill="#4aa07a"/><rect x="40" y="8.4" width="19" height="9.4" fill="#96d2b0"/><rect x="20.5" y="18.6" width="19" height="9.4" fill="#f6b26b"/><rect x="40" y="18.6" width="19" height="9.4" fill="#4aa07a"/><rect x="20.5" y="28.8" width="19" height="9.4" fill="#96d2b0"/><rect x="40" y="28.8" width="19" height="9.4" fill="#96d2b0"/><rect x="20.5" y="39" width="19" height="3.6" fill="#4aa07a"/><rect x="40" y="39" width="19" height="3.6" fill="#96d2b0"/><path d="M20.5 18.2H59M20.5 28.4H59M20.5 38.6H59M39.8 8.4V42.6" stroke="#3d7d5f" stroke-width="0.7"/><rect x="12.5" y="12" width="5" height="1.6" fill="#aaa"/><rect x="12.5" y="22" width="6" height="1.6" fill="#aaa"/><rect x="12.5" y="32" width="4" height="1.6" fill="#aaa"/><text x="30" y="14.6" font-family="Liberation Serif,serif" font-size="5" fill="#2f6b50" opacity=".75" text-anchor="middle">1234</text><text x="49.4" y="14.6" font-family="Liberation Serif,serif" font-size="5" fill="#2f6b50" opacity=".75" text-anchor="middle">546</text><text x="30" y="24.8" font-family="Liberation Serif,serif" font-size="5" fill="#2f6b50" opacity=".75" text-anchor="middle">368</text><text x="49.4" y="24.8" font-family="Liberation Serif,serif" font-size="5" fill="#2f6b50" opacity=".75" text-anchor="middle">388</text><text x="30" y="35" font-family="Liberation Serif,serif" font-size="5" fill="#2f6b50" opacity=".75" text-anchor="middle">2620</text><text x="49.4" y="35" font-family="Liberation Serif,serif" font-size="5" fill="#2f6b50" opacity=".75" text-anchor="middle">51890</text></svg>
<div class="a" style="left:1678px;top:230px;width:69px;height:52px;background:#fff;border:1px solid #e2e2e2"></div>
<svg style="left:1678.5px;top:230.5px" width="68" height="51" viewBox="0 0 68 51"><g opacity=".55"><path d="M10 22Q14 18 22 19L24 24L20 29L16 27Q12 28 10 22ZM20 30L24 31L23 38L20 40ZM30 20Q36 17 44 18Q56 18 58 22L54 28L50 27L48 33L44 30L40 32L38 38L34 36L33 28L30 26Z" fill="#ececec"/><circle cx="10.5" cy="29" r="1.8" fill="#e8b8c0"/><circle cx="12" cy="25.5" r="1" fill="#e8b8c0"/><circle cx="18" cy="35" r="1.2" fill="#e8b8c0"/><circle cx="31.5" cy="22" r="1.2" fill="#e8b8c0"/><circle cx="35" cy="25.5" r="1.4" fill="#e8b8c0"/><circle cx="47" cy="27.5" r="2.4" fill="#e8b8c0"/><circle cx="52.5" cy="33.5" r="1.4" fill="#e8b8c0"/><circle cx="56" cy="40" r="1.2" fill="#e8b8c0"/><circle cx="38.5" cy="31.5" r="1" fill="#e8b8c0"/><circle cx="23.5" cy="36.5" r="0.9" fill="#e8b8c0"/></g></svg>
<div class="a" style="left:1753px;top:230px;width:69px;height:52px;background:#fff;border:1px solid #e2e2e2"></div>
<svg style="left:1753.5px;top:230.5px" width="68" height="51" viewBox="0 0 68 51"><g opacity=".8"><path d="M9 21L12 19.5L18 20L21 19L23 21L20 23L18 26L15 27L13 30L11 26L10 24ZM25 19L30 18.5L28 21L25 21ZM15 33L18 32L21 35L19 39L17.5 43L16 38ZM30 22L34 19L40 20L44 19L50 19.5L58 21L56 25L53 24L51 29L48 27L46 32L44 29L41 28L40 33L37 38L35 34L33 30L30 28L29 25ZM52 39L56 37L58 40L55 42L52 41Z" fill="#f8d2d2"/><path d="M9 21L12 19.5L18 20L21 19L23 21L20 23L18 26L15 27L13 30L11 26L10 24ZM15 33L18 32L21 35L19 39L17.5 43L16 38ZM25 19L30 18.5L28 21L25 21ZM52 39L56 37L58 40L55 42L52 41Z" fill="#ecb4b4"/></g></svg>
<div class="a" style="left:1828px;top:230px;width:69px;height:52px;background:#fff;border:1px solid #e2e2e2"></div>
<svg style="left:1828.5px;top:230.5px" width="68" height="51" viewBox="0 0 68 51"><circle cx="34.5" cy="25.5" r="14.4" fill="#a6cdee"/><path d="M34.5 25.5L34.5 11.1A14.4 14.4 0 0 1 44 14.8Z" fill="#f4908c"/><path d="M34.5 25.5L44 14.8A14.4 14.4 0 0 1 44.8 35.6Z" fill="#3f78ad"/><path d="M34.5 25.5L20.1 25.5A14.4 14.4 0 0 1 34.5 11.1Z" fill="#de544f"/></svg>
<div class="a" style="left:1678px;top:287px;width:69px;height:52px;background:#fff;border:2px solid #c8683a;border-radius:2px"></div>
<svg style="left:1678.5px;top:287.5px" width="68" height="51" viewBox="0 0 68 51"><rect x="12" y="11.4" width="24" height="3.8" fill="#4a78a6"/><rect x="12" y="19.4" width="44" height="3.8" fill="#4a78a6"/><rect x="12" y="27.4" width="12" height="3.8" fill="#4a78a6"/><rect x="12" y="35.4" width="35" height="3.8" fill="#4a78a6"/></svg>
<div class="a" style="left:1753px;top:287px;width:69px;height:52px;background:#fff;border:1px solid #e2e2e2"></div>
<svg style="left:1753.5px;top:287.5px" width="68" height="51" viewBox="0 0 68 51"><rect x="13" y="11.4" width="8" height="6.999999999999998" fill="#4a78a6"/><rect x="13" y="18.4" width="8" height="22.0" fill="#a8cdec"/><rect x="24" y="17.4" width="8" height="8.0" fill="#4a78a6"/><rect x="24" y="25.4" width="8" height="15.0" fill="#a8cdec"/><rect x="36" y="14.4" width="8" height="19.0" fill="#4a78a6"/><rect x="36" y="33.4" width="8" height="7.0" fill="#a8cdec"/><rect x="48" y="21.4" width="8" height="8.8" fill="#4a78a6"/><rect x="48" y="30.2" width="8" height="10.2" fill="#a8cdec"/></svg>
<div class="a" style="left:1828px;top:287px;width:69px;height:52px;background:#fff;border:1px solid #e2e2e2"></div>
<svg style="left:1828.5px;top:287.5px" width="68" height="51" viewBox="0 0 68 51"><path d="M25.4 6V46M43.6 6V46" stroke="#eee" stroke-width="0.6"/><rect x="11" y="31.4" width="4" height="14.0" fill="#cbd6e0"/><rect x="16.4" y="22.4" width="4" height="23.0" fill="#e6edf5"/><rect x="30" y="15.4" width="4" height="30.0" fill="#cbd6e0"/><rect x="35.4" y="26.4" width="4" height="19.0" fill="#e6edf5"/><rect x="48" y="35.4" width="4" height="10.0" fill="#cbd6e0"/><rect x="53.4" y="21.4" width="4" height="24.0" fill="#e6edf5"/></svg>
<div class="a" style="left:1678px;top:344px;width:69px;height:52px;background:#fff;border:1px solid #e2e2e2"></div>
<svg style="left:1678.5px;top:344.5px" width="68" height="51" viewBox="0 0 68 51"><rect x="12" y="10.6" width="20.6" height="14.4" fill="#6b9bc8"/><rect x="12" y="26.6" width="20.6" height="13.6" fill="#4a7cb0"/><rect x="34.2" y="10.6" width="10.4" height="9.6" fill="#6b9bc8"/><rect x="46" y="10.6" width="10" height="9.6" fill="#a6c8ea"/><rect x="34.2" y="21.6" width="6.4" height="9.6" fill="#f69c94"/><rect x="42" y="21.6" width="6.6" height="9.6" fill="#6b9bc8"/><rect x="50" y="21.6" width="6" height="9.6" fill="#a6c8ea"/><rect x="34.2" y="32.6" width="6.4" height="7.6" fill="#e0524c"/><rect x="42" y="32.6" width="6.6" height="7.6" fill="#a6c8ea"/><rect x="50" y="32.6" width="6" height="3.4" fill="#4a7cb0"/><rect x="50" y="37.4" width="6" height="2.8" fill="#a6c8ea"/></svg>
<div class="a" style="left:1753px;top:344px;width:69px;height:52px;background:#fff;border:1px solid #e2e2e2"></div>
<svg style="left:1753.5px;top:344.5px" width="68" height="51" viewBox="0 0 68 51"><circle cx="17.4" cy="15.6" r="4.6" fill="none" stroke="#6a94bc" stroke-width="1"/><circle cx="17.4" cy="20" r="4.6" fill="none" stroke="#4c7aa6" stroke-width="1"/><circle cx="17.4" cy="34" r="4.6" fill="none" stroke="#4c7aa6" stroke-width="1"/><circle cx="35" cy="16.4" r="4.6" fill="none" stroke="#4c7aa6" stroke-width="1"/><circle cx="35" cy="30.4" r="4.6" fill="none" stroke="#4c7aa6" stroke-width="1"/><circle cx="35" cy="35" r="4.6" fill="none" stroke="#7fa4c8" stroke-width="1"/><circle cx="53" cy="16.4" r="4.6" fill="none" stroke="#7fa4c8" stroke-width="1"/><circle cx="53" cy="23.6" r="4.6" fill="none" stroke="#b4cce2" stroke-width="1"/><circle cx="53" cy="39" r="4.6" fill="none" stroke="#b4cce2" stroke-width="1"/><path d="M30.6 46Q35 39.4 39.4 46" fill="none" stroke="#b4cce2" stroke-width="1"/></svg>
<div class="a" style="left:1828px;top:344px;width:69px;height:52px;background:#fff;border:1px solid #e2e2e2"></div>
<svg style="left:1828.5px;top:344.5px" width="68" height="51" viewBox="0 0 68 51"><path d="M35 6V46" stroke="#e8e8e8" stroke-width="0.6"/><circle cx="15.6" cy="14" r="3.6" fill="none" stroke="#d8e2ec" stroke-width="0.9"/><circle cx="15.6" cy="19" r="3.6" fill="none" stroke="#d8e2ec" stroke-width="0.9"/><circle cx="25.4" cy="18" r="3.6" fill="none" stroke="#d8e2ec" stroke-width="0.9"/><circle cx="25.4" cy="30" r="3.6" fill="none" stroke="#d8e2ec" stroke-width="0.9"/><circle cx="15.6" cy="38" r="3.6" fill="none" stroke="#d8e2ec" stroke-width="0.9"/><circle cx="25.4" cy="40" r="3.6" fill="none" stroke="#d8e2ec" stroke-width="0.9"/><circle cx="45" cy="14" r="3.6" fill="none" stroke="#d8e2ec" stroke-width="0.9"/><circle cx="54.6" cy="18" r="3.6" fill="none" stroke="#d8e2ec" stroke-width="0.9"/><circle cx="54.6" cy="23" r="3.6" fill="none" stroke="#d8e2ec" stroke-width="0.9"/><circle cx="45" cy="35" r="3.6" fill="none" stroke="#d8e2ec" stroke-width="0.9"/><circle cx="54.6" cy="35.6" r="3.6" fill="none" stroke="#d8e2ec" stroke-width="0.9"/><circle cx="45" cy="38.6" r="3.6" fill="none" stroke="#d8e2ec" stroke-width="0.9"/></svg>
<div class="a" style="left:1678px;top:401px;width:69px;height:52px;background:#fff;border:1px solid #e2e2e2"></div>
<svg style="left:1678.5px;top:401.5px" width="68" height="51" viewBox="0 0 68 51"><path d="M12 15L17.6 9.6L30 24L38.6 17.6L47 24L56.6 19" fill="none" stroke="#fadcc4" stroke-width="1"/><path d="M12 22L18 24.6L29.6 16L46.6 29L56.6 27" fill="none" stroke="#fdebd8" stroke-width="1"/><path d="M11 29.6L18.6 37L34.6 28.6L47 36.4L56.6 33.6" fill="none" stroke="#c6d4e4" stroke-width="1.1"/></svg>
<div class="a" style="left:1753px;top:401px;width:69px;height:52px;background:#fff;border:1px solid #e2e2e2"></div>
<svg style="left:1753.5px;top:401.5px" width="68" height="51" viewBox="0 0 68 51"><path d="M34.6 6V46" stroke="#ececec" stroke-width="0.6"/><path d="M10 21.6L16 22.6L23.6 16L31 16.6" fill="none" stroke="#fadcc4" stroke-width="1"/><path d="M10 27L17 25L25 20L30 24" fill="none" stroke="#fdebd8" stroke-width="1"/><path d="M10 35L16.6 37.6L23.6 31.6L31 31.6" fill="none" stroke="#c6d4e4" stroke-width="1.1"/><path d="M38.6 20L44 13.6L50 18L58 16.4" fill="none" stroke="#fadcc4" stroke-width="1"/><path d="M38.6 27L46 25.6L52 27L58 24" fill="none" stroke="#fdebd8" stroke-width="1"/><path d="M38.6 35.6L44.6 31L50.6 34.6L58 31.6" fill="none" stroke="#c6d4e4" stroke-width="1.1"/></svg>
<div class="a" style="left:1828px;top:401px;width:69px;height:52px;background:#fff;border:1px solid #e2e2e2"></div>
<svg style="left:1828.5px;top:401.5px" width="68" height="51" viewBox="0 0 68 51"><path d="M16 18L24.6 10.6L33.6 18L39 15L48.6 21L54.6 16.6" fill="none" stroke="#fadcc4" stroke-width="1.1"/><path d="M16 27L24 23.6L33.6 34L39.6 30L49 34.6L54.6 27.6" fill="none" stroke="#c6d4e4" stroke-width="1.1"/><rect x="10" y="10" width="2.4" height="0.6" fill="#f0f0f0"/><rect x="59" y="10" width="2" height="0.6" fill="#f4e6e6"/><rect x="10" y="16" width="2.4" height="0.6" fill="#f0f0f0"/><rect x="59" y="16" width="2" height="0.6" fill="#f4e6e6"/><rect x="10" y="22" width="2.4" height="0.6" fill="#f0f0f0"/><rect x="59" y="22" width="2" height="0.6" fill="#f4e6e6"/><rect x="10" y="28" width="2.4" height="0.6" fill="#f0f0f0"/><rect x="59" y="28" width="2" height="0.6" fill="#f4e6e6"/><rect x="10" y="34" width="2.4" height="0.6" fill="#f0f0f0"/><rect x="59" y="34" width="2" height="0.6" fill="#f4e6e6"/><rect x="10" y="40" width="2.4" height="0.6" fill="#f0f0f0"/><rect x="59" y="40" width="2" height="0.6" fill="#f4e6e6"/></svg>
<div class="a" style="left:1678px;top:458px;width:69px;height:52px;background:#fff;border:1px solid #e2e2e2"></div>
<svg style="left:1678.5px;top:458.5px" width="68" height="51" viewBox="0 0 68 51"><path d="M9.6 25.5L21.4 12L41.4 25.5L59.5 20V43H9.6Z" fill="#c3d3e6"/><path d="M9.6 28L21.4 21.2L41.4 33L59.5 24.3V43H9.6Z" fill="#fbdcbc"/><path d="M9.6 35L21.4 31.2L41.4 36.2L59.5 32.4V43H9.6Z" fill="#fdebd6"/></svg>
<div class="a" style="left:1753px;top:458px;width:69px;height:52px;background:#fff;border:1px solid #e2e2e2"></div>
<svg style="left:1753.5px;top:458.5px" width="68" height="51" viewBox="0 0 68 51"><g transform="translate(0 0)"><path d="M9.5 26L15.1 12L25.1 25.5L33.2 20V43H9.5Z" fill="#c3d3e6"/><path d="M9.5 29L15.1 21.2L25.1 33L33.2 24.3V43H9.5Z" fill="#fbdcbc"/><path d="M9.5 36L15.1 31.2L25.1 36.2L33.2 32.4V43H9.5Z" fill="#fdebd6"/></g><g transform="translate(26.3 0)"><path d="M9.5 26L15.1 12L25.1 25.5L33.2 20V43H9.5Z" fill="#c3d3e6"/><path d="M9.5 29L15.1 21.2L25.1 33L33.2 24.3V43H9.5Z" fill="#fbdcbc"/><path d="M9.5 36L15.1 31.2L25.1 36.2L33.2 32.4V43H9.5Z" fill="#fdebd6"/></g></svg>
<div class="a" style="left:1828px;top:458px;width:69px;height:52px;background:#fff;border:1px solid #e2e2e2"></div>
<svg style="left:1828.5px;top:458.5px" width="68" height="51" viewBox="0 0 68 51"><rect x="16.5" y="26.25" width="4.9" height="16.85" fill="#bdd0e4"/><rect x="24.6" y="21.25" width="4.9" height="21.85" fill="#bdd0e4"/><rect x="32.75" y="30.25" width="4.9" height="12.850000000000001" fill="#bdd0e4"/><rect x="40.6" y="12.25" width="4.9" height="30.85" fill="#bdd0e4"/><rect x="48.6" y="25.25" width="4.9" height="17.85" fill="#bdd0e4"/><path d="M18.4 22.5L26.5 14L34.6 26.5L43.4 18.1L49.6 23.75" fill="none" stroke="#fbe2cc" stroke-width="1"/><rect x="10" y="10" width="2.4" height="0.6" fill="#f0f0f0"/><rect x="59" y="10" width="2" height="0.6" fill="#f4e6e6"/><rect x="10" y="16" width="2.4" height="0.6" fill="#f0f0f0"/><rect x="59" y="16" width="2" height="0.6" fill="#f4e6e6"/><rect x="10" y="22" width="2.4" height="0.6" fill="#f0f0f0"/><rect x="59" y="22" width="2" height="0.6" fill="#f4e6e6"/><rect x="10" y="28" width="2.4" height="0.6" fill="#f0f0f0"/><rect x="59" y="28" width="2" height="0.6" fill="#f4e6e6"/><rect x="10" y="34" width="2.4" height="0.6" fill="#f0f0f0"/><rect x="59" y="34" width="2" height="0.6" fill="#f4e6e6"/><rect x="10" y="40" width="2.4" height="0.6" fill="#f0f0f0"/><rect x="59" y="40" width="2" height="0.6" fill="#f4e6e6"/></svg>
<div class="a" style="left:1678px;top:515px;width:69px;height:52px;background:#fff;border:1px solid #e2e2e2"></div>
<svg style="left:1678.5px;top:515.5px" width="68" height="51" viewBox="0 0 68 51"><circle cx="28" cy="15.6" r="3.4" fill="none" stroke="#fbdcc8" stroke-width="1"/><circle cx="49" cy="17.6" r="3.4" fill="none" stroke="#fbdcc8" stroke-width="1"/><circle cx="20" cy="25.6" r="3.4" fill="none" stroke="#fbdcc8" stroke-width="1"/><circle cx="31" cy="29.6" r="3.4" fill="none" stroke="#fbdcc8" stroke-width="1"/><circle cx="14" cy="37.6" r="3.4" fill="none" stroke="#fbdcc8" stroke-width="1"/><path d="M37.6 11.4H45.6M41.6 7.4V15.4" stroke="#c4dcd8" stroke-width="0.9"/><path d="M33.6 22.4H41.6M37.6 18.4V26.4" stroke="#c4dcd8" stroke-width="0.9"/><path d="M48.6 28.4H56.6M52.6 24.4V32.4" stroke="#c4dcd8" stroke-width="0.9"/><path d="M19.6 35.4H27.6M23.6 31.4V39.4" stroke="#c4dcd8" stroke-width="0.9"/><path d="M37.6 34.4H45.6M41.6 30.4V38.4" stroke="#c4dcd8" stroke-width="0.9"/></svg>
<div class="a" style="left:1753px;top:515px;width:69px;height:52px;background:#fff;border:1px solid #e2e2e2"></div>
<svg style="left:1753.5px;top:515.5px" width="68" height="51" viewBox="0 0 68 51"><rect x="12" y="39.6" width="4.2" height="2.3999999999999986" fill="#c6e2d6"/><rect x="17" y="34" width="4.2" height="8" fill="#c6e2d6"/><rect x="22" y="25.4" width="4.2" height="16.6" fill="#c6e2d6"/><rect x="27" y="15.4" width="4.2" height="26.6" fill="#c6e2d6"/><rect x="32" y="11.4" width="4.2" height="30.6" fill="#c6e2d6"/><rect x="37" y="15.4" width="4.2" height="26.6" fill="#c6e2d6"/><rect x="42" y="25.4" width="4.2" height="16.6" fill="#c6e2d6"/><rect x="47" y="34" width="4.2" height="8" fill="#c6e2d6"/><rect x="52" y="39.6" width="4.2" height="2.3999999999999986" fill="#c6e2d6"/></svg>
<div class="a" style="left:1828px;top:515px;width:69px;height:52px;background:#fff;border:1px solid #e2e2e2"></div>
<svg style="left:1828.5px;top:515.5px" width="68" height="51" viewBox="0 0 68 51"><rect x="13.6" y="22" width="6.8" height="5" fill="#8fcfae"/><rect x="13.6" y="27" width="6.8" height="7" fill="#4aa07a"/><path d="M17 15V38M14.6 15H19.4M14.6 38H19.4" stroke="#222" stroke-width="1"/><rect x="25.6" y="17" width="6.8" height="10" fill="#8fcfae"/><rect x="25.6" y="27" width="6.8" height="4" fill="#4aa07a"/><path d="M29 13V40M26.6 13H31.4M26.6 40H31.4" stroke="#222" stroke-width="1"/><rect x="37.6" y="20" width="6.8" height="9" fill="#8fcfae"/><rect x="37.6" y="29" width="6.8" height="7" fill="#4aa07a"/><path d="M41 12V41M38.6 12H43.4M38.6 41H43.4" stroke="#222" stroke-width="1"/><rect x="49.6" y="15" width="6.8" height="13" fill="#8fcfae"/><rect x="49.6" y="28" width="6.8" height="4" fill="#4aa07a"/><path d="M53 10V42M50.6 10H55.4M50.6 42H55.4" stroke="#222" stroke-width="1"/></svg>
<div class="a" style="left:1678px;top:572px;width:69px;height:52px;background:#fff;border:1px solid #e2e2e2"></div>
<svg style="left:1678.5px;top:572.5px" width="68" height="51" viewBox="0 0 68 51"><rect x="10" y="9" width="9" height="7.6" fill="#bfe0d2"/><rect x="26" y="9" width="4" height="7.6" fill="#f6d3b0"/><rect x="31" y="9" width="3.4" height="7.6" fill="#fde6d0"/><rect x="42" y="9" width="2" height="7.6" fill="#fbd9ba"/><rect x="48.6" y="9" width="7.4" height="7.6" fill="#fde6d0"/><rect x="10" y="21" width="6" height="7.6" fill="#d6ebe2"/><rect x="17.4" y="21" width="2.6" height="7.6" fill="#bfe0d2"/><rect x="24.4" y="21" width="3.6" height="7.6" fill="#c4dcd4"/><rect x="31.4" y="21" width="13.6" height="7.6" fill="#d6ebe2"/><rect x="50.4" y="21" width="7.6" height="7.6" fill="#fbd9ba"/><rect x="10" y="34" width="2" height="7.6" fill="#bfe0d2"/><rect x="15.4" y="34" width="7.6" height="7.6" fill="#fde6d0"/><rect x="25" y="34" width="2" height="7.6" fill="#fbd9ba"/><rect x="29.4" y="34" width="3.6" height="7.6" fill="#d6ebe2"/><rect x="39.4" y="34" width="6.6" height="7.6" fill="#bfe0d2"/><rect x="52.4" y="34" width="3.6" height="7.6" fill="#fde6d0"/></svg>
<div class="a" style="left:1753px;top:572px;width:69px;height:52px;background:#fff;border:1px solid #e2e2e2"></div>
<svg style="left:1753.5px;top:572.5px" width="68" height="51" viewBox="0 0 68 51"><rect x="11.6" y="11.4" width="25" height="4.4" fill="#c6e2d6"/><rect x="36.6" y="11" width="16" height="5.4" fill="#f0f0f0" opacity=".8"/><rect x="39.4" y="10" width="1" height="7.4" fill="#8c9c96"/><rect x="11.6" y="23.4" width="40" height="4.4" fill="#c6e2d6"/><rect x="46.4" y="22" width="1" height="7.4" fill="#8c9c96"/><rect x="11.6" y="35.4" width="21" height="4.4" fill="#c6e2d6"/><rect x="32.6" y="35.4" width="20" height="4.4" fill="#f6f6f6" opacity=".8"/><rect x="52.6" y="34" width="0.9" height="7.4" fill="#8c9c96"/></svg>
<div class="a" style="left:1828px;top:572px;width:69px;height:52px;background:#fff;border:1px solid #e2e2e2"></div>
<svg style="left:1828.5px;top:572.5px" width="68" height="51" viewBox="0 0 68 51"><circle cx="22" cy="32" r="9.4" fill="#96d6b0"/><circle cx="23" cy="18" r="3.6" fill="#4aa680"/><circle cx="32.6" cy="15.4" r="5" fill="#4aa680"/><circle cx="42.4" cy="16.4" r="3" fill="#96d6b0"/><circle cx="52" cy="21" r="6.6" fill="#fbb36c"/><circle cx="37.4" cy="26.6" r="5.6" fill="#fbb36c"/><circle cx="46.6" cy="31.6" r="3.6" fill="#f08c28"/><circle cx="36.6" cy="37.6" r="4.2" fill="#4aa680"/></svg>
<div class="a" style="left:1751px;top:673.5px;width:113px;height:24px;border-radius:12px;background:#4996b2"></div>
<div class="a" style="left:1751px;top:707.5px;width:98px;height:24px;border-radius:12px;background:#00b180"></div>
<div class="a" style="left:1900px;top:836px;width:20px;height:121px;background:#f0f0f0;border-left:1px solid #fafafa"></div>
<div class="a" style="left:1907px;top:837px;width:6px;height:97px;background:#808080"></div>
<div class="t" style="top:7.23px;font-size:14.5px;color:#000;letter-spacing:0.055px;left:27.5px;">Tableau Public - Book1</div>
<div class="t" style="top:35.23px;font-size:14.5px;color:#000;letter-spacing:-0.250px;left:8px;">File</div>
<div class="t" style="top:35.23px;font-size:14.5px;color:#000;letter-spacing:0.103px;left:47.5px;">Data</div>
<div class="t" style="top:35.23px;font-size:14.5px;color:#000;letter-spacing:-0.064px;left:95.5px;">Worksheet</div>
<div class="t" style="top:35.23px;font-size:14.5px;color:#000;letter-spacing:0.125px;left:180.5px;">Dashboard</div>
<div class="t" style="top:35.23px;font-size:14.5px;color:#000;letter-spacing:0.035px;left:269px;">Story</div>
<div class="t" style="top:35.23px;font-size:14.5px;color:#000;letter-spacing:-0.200px;left:319.5px;">Analysis</div>
<div class="t" style="top:35.23px;font-size:14.5px;color:#000;letter-spacing:0.512px;left:388px;">Map</div>
<div class="t" style="top:35.23px;font-size:14.5px;color:#000;letter-spacing:0.105px;left:434.5px;">Format</div>
<div class="t" style="top:35.23px;font-size:14.5px;color:#000;letter-spacing:-0.312px;left:497px;">Server</div>
<div class="t" style="top:35.23px;font-size:14.5px;color:#000;letter-spacing:0.622px;left:554px;">Window</div>
<div class="t" style="top:35.23px;font-size:14.5px;color:#000;letter-spacing:0.335px;left:625.5px;">Help</div>
<div class="t" style="top:72.19px;font-size:17.5px;color:#2e7499;letter-spacing:-0.026px;left:54.5px;">Tableau Desktop Public Edition</div>
<div class="t" style="top:72.19px;font-size:17.5px;color:#2e7499;letter-spacing:-0.049px;left:1766px;">Buy Tableau</div>
<div class="t" style="top:120.76px;font-size:18px;color:#333;letter-spacing:-0.402px;left:762.5px;">Entire View</div>
<div class="t" style="top:120.76px;font-size:18px;color:#2e2e2e;letter-spacing:-0.700px;left:1820.5px;">Show Me</div>
<div class="t" style="top:162.81px;font-size:17px;color:#111;font-weight:700;letter-spacing:-0.211px;left:23px;">Dashboard</div>
<div class="t" style="top:162.61px;font-size:17px;color:#222;letter-spacing:0.173px;left:163px;">Layout</div>
<div class="t" style="top:205.03px;font-size:16.5px;color:#444;letter-spacing:0.495px;left:33.5px;">Default</div>
<div class="t" style="top:231.03px;font-size:16.5px;color:#444;letter-spacing:0.285px;left:43.5px;">Phone</div>
<div class="t" style="top:271.30px;font-size:15px;color:#444;letter-spacing:-0.028px;left:78.5px;">Device Preview</div>
<div class="t" style="top:311.61px;font-size:17px;color:#222;font-weight:700;letter-spacing:-0.152px;left:18.5px;">Size</div>
<div class="t" style="top:339.30px;font-size:15px;color:#333;letter-spacing:0.355px;left:19.5px;">Fit to height: width: 1020</div>
<div class="t" style="top:387.61px;font-size:17px;color:#222;font-weight:700;letter-spacing:-0.045px;left:18.5px;">Sheets</div>
<div class="t" style="top:422.99px;font-size:17.5px;color:#444;letter-spacing:-0.281px;left:46.8px;">Sheet 1</div>
<div class="t" style="top:454.99px;font-size:17.5px;color:#444;letter-spacing:-0.204px;left:46.8px;">Sheet 2</div>
<div class="t" style="top:672.46px;font-size:16px;color:#222;letter-spacing:0.654px;left:12.5px;-webkit-text-stroke:0.3px #222;">Objects</div>
<div class="t" style="top:707.88px;font-size:15.5px;color:#333;letter-spacing:0.216px;left:41.5px;-webkit-text-stroke:0.18px #333;">Horizontal Container</div>
<div class="t" style="top:732.88px;font-size:15.5px;color:#333;letter-spacing:0.180px;left:41.5px;-webkit-text-stroke:0.18px #333;">Vertical Container</div>
<div class="t" style="top:757.88px;font-size:15.5px;color:#333;letter-spacing:-0.125px;left:41.5px;-webkit-text-stroke:0.18px #333;">Text</div>
<div class="t" style="top:782.88px;font-size:15.5px;color:#333;letter-spacing:0.050px;left:41.5px;-webkit-text-stroke:0.18px #333;">Extension</div>
<div class="t" style="top:808.38px;font-size:15.5px;color:#333;letter-spacing:0.106px;left:41.5px;-webkit-text-stroke:0.18px #333;">Pulse Metric</div>
<div class="t" style="top:832.88px;font-size:15.5px;color:#333;letter-spacing:0.186px;left:41.5px;-webkit-text-stroke:0.18px #333;">Data Story</div>
<div class="t" style="top:857.88px;font-size:15.5px;color:#333;letter-spacing:-0.132px;left:41.5px;-webkit-text-stroke:0.18px #333;">Image</div>
<div class="t" style="top:895.96px;font-size:16px;color:#fff;font-weight:700;letter-spacing:-0.122px;left:53px;">Tiled</div>
<div class="t" style="top:895.96px;font-size:16px;color:#222;letter-spacing:0.210px;left:160.5px;-webkit-text-stroke:0.25px #222;">Floating</div>
<div class="t" style="top:930.38px;font-size:15.5px;color:#222;letter-spacing:0.166px;left:45px;-webkit-text-stroke:0.25px #222;">Show dashboard title</div>
<div class="t" style="top:969.46px;font-size:16px;color:#666;letter-spacing:-0.470px;left:25.5px;">Data Source</div>
<div class="t" style="top:969.46px;font-size:16px;color:#666;letter-spacing:-0.562px;left:170.5px;">Sheet 1</div>
<div class="t" style="top:969.46px;font-size:16px;color:#666;letter-spacing:-0.332px;left:241px;">Sheet 2</div>
<div class="t" style="top:969.46px;font-size:16px;color:#4a4a4a;font-weight:700;letter-spacing:-0.707px;left:330.5px;">Dashboard 1</div>
<div class="t" style="top:1000.15px;font-size:14px;color:#222;letter-spacing:-0.307px;left:4px;">1 of 4 marks</div>
<div class="t" style="top:1000.15px;font-size:14px;color:#222;letter-spacing:-0.321px;left:99.5px;">1 row by 4 columns</div>
<div class="t" style="top:1000.15px;font-size:14px;color:#222;letter-spacing:-0.196px;left:236px;">SUM(Unhealthy): 420</div>
<div class="t" style="top:1042.61px;font-size:17px;color:#555;letter-spacing:-0.614px;left:594.5px;">Search</div>
<div class="t" style="top:648.30px;font-size:15px;color:#222;left:1680px;">For</div>
<div class="t" style="top:648.30px;font-size:15px;color:#111;font-weight:700;letter-spacing:-0.036px;left:1706.5px;">horizontal bars</div>
<div class="t" style="top:648.30px;font-size:15px;color:#222;letter-spacing:0.931px;left:1818px;">try</div>
<div class="t" style="top:680.30px;font-size:15px;color:#222;letter-spacing:0.329px;left:1680px;">0 or more</div>
<div class="t" style="top:678.30px;font-size:15px;color:#fff;letter-spacing:0.382px;left:1764.5px;">Dimensions</div>
<div class="t" style="top:714.30px;font-size:15px;color:#222;letter-spacing:0.329px;left:1680px;">1 or more</div>
<div class="t" style="top:712.30px;font-size:15px;color:#fff;letter-spacing:0.352px;left:1764.5px;">Measures</div>
<div class="t" style="top:1032.73px;font-size:14.5px;color:#111;letter-spacing:-0.231px;left:1813.73px;">6:25 PM</div>
<div class="t" style="top:1052.73px;font-size:14.5px;color:#111;letter-spacing:0.410px;left:1797.59px;">2/27/2026</div>
<div class="t" style="top:1044.92px;font-size:12.5px;color:#fff;left:1881.52px;">2</div>
<div class="t" style="top:176.84px;font-size:25px;color:#636363;letter-spacing:0.202px;left:278.5px;">Sheet 1</div>
<div class="t" style="top:569.84px;font-size:25px;color:#636363;letter-spacing:0.202px;left:278.5px;">Sheet 2</div>
<div class="t" style="top:220.30px;font-size:15px;color:#333;letter-spacing:0.459px;left:780px;">Factory</div>
<div class="t" style="top:613.30px;font-size:15px;color:#333;letter-spacing:0.118px;left:765px;">Device Type</div>
<div class="t" style="top:241.28px;font-size:15.5px;color:#7b7b7b;letter-spacing:0.050px;left:308.75px;">500</div>
<div class="t" style="top:290.28px;font-size:15.5px;color:#7b7b7b;letter-spacing:0.050px;left:308.75px;">400</div>
<div class="t" style="top:347.28px;font-size:15.5px;color:#7b7b7b;letter-spacing:0.050px;left:308.75px;">300</div>
<div class="t" style="top:404.78px;font-size:15.5px;color:#7b7b7b;letter-spacing:0.050px;left:308.75px;">200</div>
<div class="t" style="top:462.28px;font-size:15.5px;color:#7b7b7b;letter-spacing:0.050px;left:308.75px;">100</div>
<div class="t" style="top:509.28px;font-size:15.5px;color:#7b7b7b;left:326.18px;">0</div>
<div class="t" style="top:634.28px;font-size:15.5px;color:#7b7b7b;letter-spacing:0.050px;left:308.75px;">500</div>
<div class="t" style="top:683.28px;font-size:15.5px;color:#7b7b7b;letter-spacing:0.050px;left:308.75px;">400</div>
<div class="t" style="top:740.28px;font-size:15.5px;color:#7b7b7b;letter-spacing:0.050px;left:308.75px;">300</div>
<div class="t" style="top:797.78px;font-size:15.5px;color:#7b7b7b;letter-spacing:0.050px;left:308.75px;">200</div>
<div class="t" style="top:855.28px;font-size:15.5px;color:#7b7b7b;letter-spacing:0.050px;left:308.75px;">100</div>
<div class="t" style="top:902.28px;font-size:15.5px;color:#7b7b7b;left:326.18px;">0</div>
<div class="t" style="top:533.73px;font-size:14.5px;color:#7b7b7b;letter-spacing:0.870px;left:408.56px;">daikibo-berlin</div>
<div class="t" style="top:533.73px;font-size:14.5px;color:#7b7b7b;letter-spacing:0.887px;left:611.56px;">daikibo-factory-meiyo</div>
<div class="t" style="top:533.73px;font-size:14.5px;color:#7b7b7b;letter-spacing:0.830px;left:846.58px;">daikibo-factory-seiko</div>
<div class="t" style="top:533.73px;font-size:14.5px;color:#7b7b7b;letter-spacing:0.666px;left:1091.67px;">daikibo-shenzhen</div>
<div class="t" style="top:926.73px;font-size:14.5px;color:#7b7b7b;letter-spacing:0.833px;left:356.33px;">AirWrench</div>
<div class="t" style="top:926.73px;font-size:14.5px;color:#7b7b7b;letter-spacing:-1.369px;left:483.18px;">CNC</div>
<div class="t" style="top:926.73px;font-size:14.5px;color:#7b7b7b;letter-spacing:0.692px;left:552.15px;">ConveyorBelt</div>
<div class="t" style="top:926.73px;font-size:14.5px;color:#7b7b7b;letter-spacing:0.430px;left:674.78px;">Furnace</div>
<div class="t" style="top:926.73px;font-size:14.5px;color:#7b7b7b;letter-spacing:0.569px;left:757.22px;">HeavyDutyD..</div>
<div class="t" style="top:926.73px;font-size:14.5px;color:#7b7b7b;letter-spacing:0.737px;left:866.88px;">LaserCutter</div>
<div class="t" style="top:926.73px;font-size:14.5px;color:#7b7b7b;letter-spacing:0.671px;left:967.16px;">LaserWelder</div>
<div class="t" style="top:926.73px;font-size:14.5px;color:#7b7b7b;letter-spacing:0.786px;left:1074.61px;">MetalPress</div>
<div class="t" style="top:926.73px;font-size:14.5px;color:#7b7b7b;letter-spacing:0.895px;left:1175.55px;">SpotWelder</div>
<div class="t" style="left:291.2px;top:381px;font-size:15px;color:#333;letter-spacing:0.6px;transform:translate(-50%,-50%) rotate(-90deg);">Unhealthy</div>
<div class="t" style="left:291.2px;top:774px;font-size:15px;color:#333;letter-spacing:0.6px;transform:translate(-50%,-50%) rotate(-90deg);">Unhealthy</div>
</div></body></html>
